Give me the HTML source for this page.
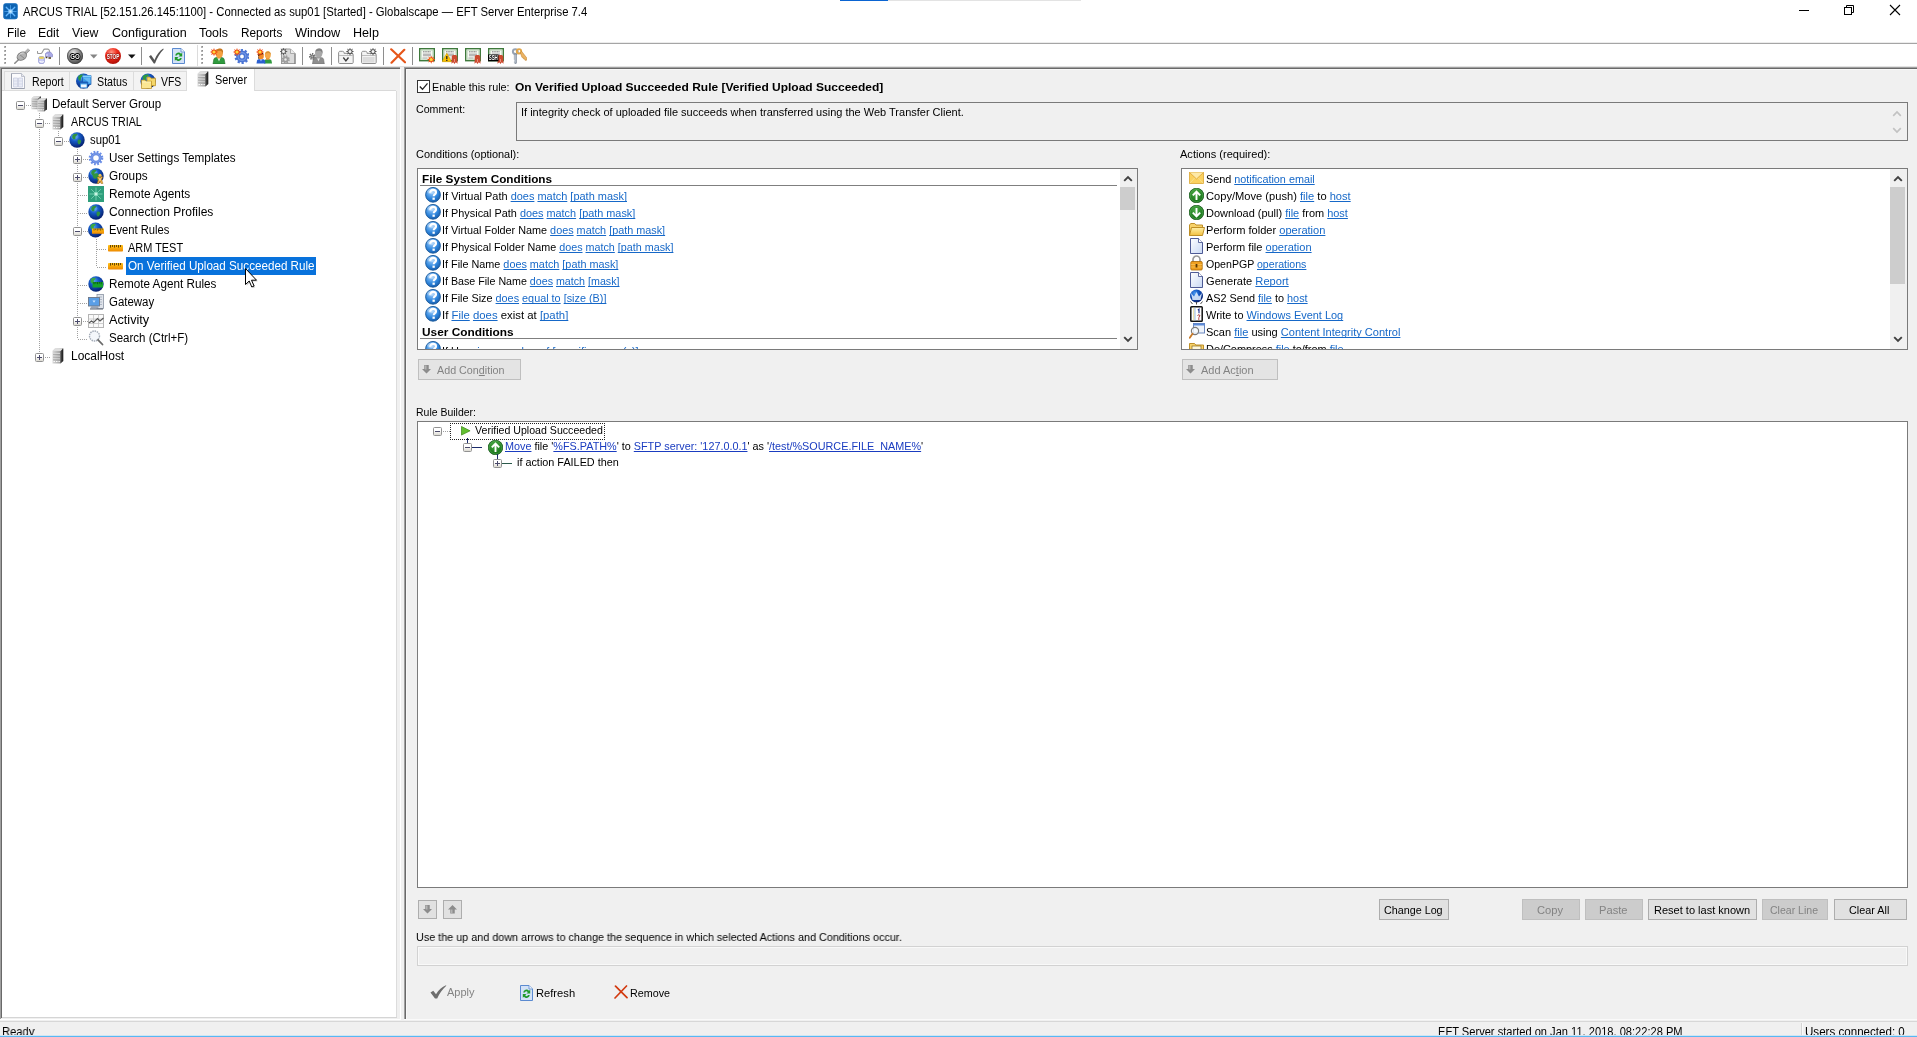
<!DOCTYPE html>
<html><head><meta charset="utf-8"><title>EFT Server</title>
<style>
html,body{margin:0;padding:0}
html{width:1917px;height:1037px;overflow:hidden}
body{width:1917px;height:1037px;overflow:hidden;background:#f0f0f0;position:relative;font-family:"Liberation Sans",sans-serif;}
.a{position:absolute;display:block}
.t{position:absolute;white-space:nowrap;line-height:16px;color:#000;transform-origin:0 50%}
.t u{color:#1668c8;text-decoration:underline;text-underline-offset:1px;text-decoration-thickness:1px;text-decoration-skip-ink:none}
.rb u{color:#1a3cc0}
.clip{position:absolute;overflow:hidden}
.root{position:absolute;left:0;top:0;width:1917px;height:1037px;overflow:hidden;will-change:transform}
</style></head>
<body>
<svg width="0" height="0" style="position:absolute"><defs>
<radialGradient id="gGlobe" cx="38%" cy="30%" r="75%"><stop offset="0" stop-color="#4f9ef2"/><stop offset=".4" stop-color="#1458c4"/><stop offset="1" stop-color="#041a66"/></radialGradient>
<radialGradient id="gGo" cx="40%" cy="30%" r="70%"><stop offset="0" stop-color="#e8e8e8"/><stop offset=".55" stop-color="#8a8a8a"/><stop offset="1" stop-color="#4a4a4a"/></radialGradient>
<radialGradient id="gStop" cx="40%" cy="28%" r="72%"><stop offset="0" stop-color="#ff9a8a"/><stop offset=".5" stop-color="#ee2a1a"/><stop offset="1" stop-color="#b01008"/></radialGradient>
<radialGradient id="gGreen" cx="45%" cy="35%" r="65%"><stop offset="0" stop-color="#4fb04a"/><stop offset="1" stop-color="#0f6a12"/></radialGradient>
<radialGradient id="gQ" cx="40%" cy="30%" r="75%"><stop offset="0" stop-color="#9fd0ff"/><stop offset=".6" stop-color="#2f86dc"/><stop offset="1" stop-color="#1458a8"/></radialGradient>
<linearGradient id="gSrv" x1="0" y1="0" x2="1" y2="0"><stop offset="0" stop-color="#d8d8d8"/><stop offset=".55" stop-color="#b0b0b0"/><stop offset="1" stop-color="#8a8a8a"/></linearGradient>
<linearGradient id="gRul" x1="0" y1="0" x2="0" y2="1"><stop offset="0" stop-color="#ffc21a"/><stop offset="1" stop-color="#ee8a00"/></linearGradient>
<linearGradient id="gFold" x1="0" y1="0" x2="0" y2="1"><stop offset="0" stop-color="#fff0a8"/><stop offset="1" stop-color="#f2c040"/></linearGradient>
<linearGradient id="gDoc" x1="0" y1="0" x2="1" y2="1"><stop offset="0" stop-color="#ffffff"/><stop offset="1" stop-color="#c8d8f4"/></linearGradient>
<radialGradient id="gAppGlow"><stop offset="0" stop-color="#d4efff"/><stop offset=".5" stop-color="#9ad4ff" stop-opacity=".9"/><stop offset="1" stop-color="#66b8ff" stop-opacity="0"/></radialGradient>
<radialGradient id="gAgGlow"><stop offset="0" stop-color="#f0fff8"/><stop offset=".5" stop-color="#c0f4de" stop-opacity=".8"/><stop offset="1" stop-color="#7fdcb8" stop-opacity="0"/></radialGradient>
<linearGradient id="gApp" x1="0" y1="0" x2="1" y2="1"><stop offset="0" stop-color="#2d9be6"/><stop offset="1" stop-color="#0a5fb4"/></linearGradient>
<symbol id="app" viewBox="0 0 15 17"><rect x=".3" y=".3" width="14.400" height="15.900" rx="2.600" fill="#0d62b0"/><rect x=".8" y=".8" width="13.400" height="14.900" rx="2.200" fill="none" stroke="#2a86d8" stroke-width=".6" opacity=".6"/><g stroke="#66b8ff" stroke-linecap="round"><path d="M3.200 4.200l8.600 8.600M11.800 4.200l-8.600 8.600" stroke-width="1.300"/><path d="M7.500 2.500v12M1.800 8.500h11.400" stroke-width=".8" opacity=".75"/></g><circle cx="7.500" cy="8.500" r="3.200" fill="url(#gAppGlow)"/></symbol><symbol id="plug" viewBox="0 0 16 16"><path d="M.3 15.700L5.500 10.800" stroke="#8a8a8a" stroke-width="1.500"/><path d="M10.500 5.800L15 1.300" stroke="#b4b4b4" stroke-width="3"/><path d="M11.300 6.600L15.800 2.100" stroke="#8e8e8e" stroke-width=".8"/><ellipse cx="7.800" cy="8.200" rx="5" ry="3.700" transform="rotate(-32 7.800 8.200)" fill="#b2b2b2" stroke="#7c7c7c" stroke-width="1"/><path d="M4.800 5.800l5.500 4.600" stroke="#858585" stroke-width="1"/><path d="M5 7.200c1-1.600 3-2.400 4.600-2" stroke="#dcdcdc" stroke-width=".9" fill="none"/></symbol><symbol id="net" viewBox="0 0 16 16"><path d="M.4 3v1.300c0 .8.500 1.200 1.200 1.200h2c.8 0 1.300-.4 1.700-1.200l1.200-2.400c.3-.6.700-.8 1.300-.8h3c.8 0 1.300.4 1.500 1.200l.3 1.500" fill="none" stroke="#9a9a9a" stroke-width="1.100"/><path d="M8.500 5.500l2-1.500h3l2 2.500v2.300h-7z" fill="#a9a9e6" stroke="#7a7ac0" stroke-width=".6"/><path d="M8.700 8.800h1.600v1.400H8.700zM11.500 9.200h2.500v1.500h-2.500z" fill="#4a3a1a"/><path d="M9.500 6h1v2h-1z" fill="#fff" opacity=".8"/><path d="M1.700 10c0-1 1.200-1.500 2.800-1.500s2.800.5 2.800 1.500v4c0 1-1.200 1.700-2.800 1.700S1.700 15 1.700 14z" fill="#c9ccf4" stroke="#7a80c8" stroke-width=".7"/><ellipse cx="4.500" cy="9.800" rx="2.700" ry="1.200" fill="#e6d060"/><path d="M2.500 13c.8 1.200 3 1.400 4.200.3" stroke="#fff" stroke-width="1.100" fill="none"/></symbol><symbol id="go" viewBox="0 0 16 16"><circle cx="8" cy="8" r="8" fill="url(#gGo)"/><circle cx="8" cy="8" r="7.600" fill="none" stroke="#3c3c3c" stroke-width=".6"/><text x="8" y="11" font-family="Liberation Sans" font-size="7.500" font-weight="bold" fill="#fff" stroke="#000" stroke-width="2.200" stroke-linejoin="round" paint-order="stroke" text-anchor="middle" textLength="9.500" lengthAdjust="spacingAndGlyphs">GO</text></symbol><symbol id="stop" viewBox="0 0 16 16"><circle cx="8" cy="8" r="8" fill="url(#gStop)"/><text x="8" y="10.900" font-family="Liberation Sans" font-size="7" font-weight="bold" fill="#fff" stroke="#8a0a04" stroke-width="1.200" stroke-linejoin="round" paint-order="stroke" text-anchor="middle" textLength="12.500" lengthAdjust="spacingAndGlyphs">STOP</text></symbol><symbol id="check" viewBox="0 0 16 16"><path d="M1 8.500l2-1.500 3.500 5C8.500 7 11.500 3 15.200.6l.5.600C12 5 9 10 7 15.500H5.800z" fill="#555"/></symbol><symbol id="checkg" viewBox="0 0 17 14"><path d="M.5 7.500l2.800-1.800 2.700 3.600C8.500 5 12 1.800 16 .2l.3.600C12.500 4 9.500 8.500 7.200 13.500H5z" fill="#6e6e6e"/></symbol><symbol id="refdoc" viewBox="0 0 13 16"><path d="M.5.500h8.500l3.500 3.500v11.500h-12z" fill="#d3e2f7" stroke="#5b8ad0" stroke-width="1"/><path d="M9 .5v3.500h3.500" fill="#eef4fc" stroke="#5b8ad0" stroke-width=".8"/><path d="M3.200 7.500a3.300 3.300 0 0 1 5.800-1.800l1.200-1v3.800H6.500l1.300-1.300A1.900 1.900 0 0 0 4.800 7.500z" fill="#1f9a2a"/><path d="M9.800 10a3.300 3.300 0 0 1-5.800 1.800l-1.200 1V9h3.700l-1.300 1.300A1.900 1.900 0 0 0 8.200 10z" fill="#1f9a2a"/></symbol><symbol id="usernew" viewBox="0 0 16 16"><path d="M3 16l.8-4.600c.3-1.200 1.400-1.900 3-1.900h4.400c1.600 0 2.700.7 3 1.900L15 16z" fill="#2f9a3e" stroke="#1a6a24" stroke-width=".6"/><path d="M7.300 9.600L9 13.500l1.700-3.900z" fill="#eef8ee"/><path d="M7.500 8h3v2.500h-3z" fill="#e89030"/><ellipse cx="9.200" cy="5.200" rx="3.700" ry="4.500" fill="#f5a040"/><path d="M5.800 3.600C6.500 1.200 8.500.3 10.500.6c2.300.4 3 2.400 2.400 5.400-.3-2-1.200-3.300-3-3.300-1.500 0-2.700.3-4.100.9z" fill="#c87820"/><path d="M4 0l.9 2.200L7 1l-1 2.100L8.200 4 6 4.900 7 7 4.900 6 4 8.200 3.100 6 1 7l1-2.100L-.2 4 2 3.100 1 1l2.100 1.200z" fill="#f04a10"/><circle cx="4" cy="4" r="1.600" fill="#ffd83a"/></symbol><symbol id="gearnew" viewBox="0 0 16 16"><g transform="translate(9 8.500)"><circle r="6.400" fill="none" stroke="#4a74d4" stroke-width="2.200" stroke-dasharray="2.200 1.820"/><circle r="3.900" fill="none" stroke="#4a74d4" stroke-width="4"/><circle r="3.900" fill="none" stroke="#86a6ea" stroke-width="1.200" opacity=".7"/></g><path d="M4 0l.9 2.200L7 1l-1 2.100L8.200 4 6 4.900 7 7 4.900 6 4 8.200 3.100 6 1 7l1-2.100L-.2 4 2 3.100 1 1l2.100 1.200z" fill="#f04a10"/><circle cx="4" cy="4" r="1.600" fill="#ffd83a"/></symbol><symbol id="usersnew" viewBox="0 0 16 16"><path d="M8 15.500l.5-2.800c.2-1 1-1.500 2.200-1.500h2.600c1.200 0 2 .5 2.200 1.500l.5 2.800z" fill="#2f9a3e"/><path d="M10 9.500h3.500v2.200H10z" fill="#e89030"/><ellipse cx="11.800" cy="7" rx="3" ry="3.600" fill="#f5a848"/><path d="M9 5.800c.5-2 2-2.700 3.500-2.500 1.600.3 2.500 1.700 2.200 3.700-.6-1.500-1.500-2-2.700-2-1.200 0-2 .3-3 .8z" fill="#d89030"/><path d="M.5 15.500l.5-2.800c.2-1 1-1.500 2.200-1.500h3.600c1.200 0 2 .5 2.200 1.500l.5 2.800z" fill="#2a5fd0"/><path d="M4.200 11.200L5 13.500l.8-2.300z" fill="#e8f0ff"/><ellipse cx="5" cy="8" rx="2.800" ry="3.300" fill="#f08a28"/><path d="M2.200 8.500c-.4-2.500 1-4 2.800-4 1.500 0 2.500.8 2.800 2-1.800-.6-3.500 0-5.600 2z" fill="#3a1a08"/><path d="M2.300 8.300c.2 1.500.8 2.500 1.500 3-1.400 0-2.200-1.200-1.500-3z" fill="#3a1a08"/><path d="M4 0l.9 2.200L7 1l-1 2.100L8.200 4 6 4.900 7 7 4.900 6 4 8.200 3.100 6 1 7l1-2.100L-.2 4 2 3.100 1 1l2.100 1.200z" fill="#f04a10"/><circle cx="4" cy="4" r="1.600" fill="#ffd83a"/></symbol><symbol id="docgray" viewBox="0 0 16 16"><path d="M1.500 1h9l4.500 4.500V16H1.500z" fill="#dadada" stroke="#9a9a9a" stroke-width="1"/><path d="M15 16V5.500M1.500 16H15" stroke="#7c7c7c" stroke-width="1"/><path d="M10.500 1v4.500H15" fill="#ececec" stroke="#9a9a9a" stroke-width=".8"/><g transform="translate(5.500 11.500)"><circle r="3.400" fill="none" stroke="#9c9c9c" stroke-width="1.700" stroke-dasharray="1.500 1.170"/><circle r="2.200" fill="#c4c4c4" stroke="#9c9c9c" stroke-width="1.500"/><circle r="1" fill="#ececec"/></g><g transform="translate(-.5 -.5)"><path d="M4 0l.9 2.200L7 1l-1 2.100L8.200 4 6 4.900 7 7 4.900 6 4 8.200 3.100 6 1 7l1-2.100L-.2 4 2 3.100 1 1l2.100 1.200z" fill="#5e5e5e"/><circle cx="4" cy="4" r="1.500" fill="#f2f2f2"/></g></symbol><symbol id="usergray" viewBox="0 0 16 16"><path d="M3.500 16l.7-4.600c.3-1.200 1.400-1.900 3-1.900h4.400c1.600 0 2.700.7 3 1.900l.7 4.600z" fill="#8e8e8e" stroke="#6e6e6e" stroke-width=".6"/><path d="M7.800 9.600l1.700 4 1.700-4z" fill="#ececec"/><path d="M8 8h3v2.500H8z" fill="#9a9a9a"/><ellipse cx="9.700" cy="5" rx="3.700" ry="4.500" fill="#a8a8a8"/><path d="M6.300 3.600C7 1.200 9 .3 11 .6c2.300.4 3 2.400 2.400 5.400-.3-2-1.200-3.300-3-3.300-1.500 0-2.700.3-4.100.9z" fill="#808080"/><g transform="translate(3.300 8.500)"><circle r="2.600" fill="none" stroke="#6c6c6c" stroke-width="1.600" stroke-dasharray="1.300 1.030"/><circle r="1.500" fill="#b0b0b0" stroke="#6c6c6c" stroke-width="1.200"/></g></symbol><symbol id="folder1" viewBox="0 0 16 16"><path d="M.6 14.500V4.800c0-.9.600-1.500 1.500-1.500h2.400c.9 0 1.500.5 1.500 1.400v.6h8c.8 0 1.200.4 1.200 1.200v8c0 .6-.4 1-1 1H1.600c-.6 0-1-.4-1-1z" fill="#f4f4f4" stroke="#8e8e8e" stroke-width="1"/><path d="M1 7.500h13.800" stroke="#b0b0b0" stroke-width=".8"/><path d="M5.300 9.500l2.600 3.500 2.600-3.500" fill="none" stroke="#3c3c3c" stroke-width="1.300"/><g transform="translate(8 -.5)"><path d="M4 0l.9 2.200L7 1l-1 2.100L8.200 4 6 4.900 7 7 4.900 6 4 8.200 3.100 6 1 7l1-2.100L-.2 4 2 3.100 1 1l2.100 1.200z" fill="#555"/><circle cx="4" cy="4" r="1.500" fill="#f6f6f6"/></g></symbol><symbol id="folder2" viewBox="0 0 16 16"><path d="M.6 14.500V4.800c0-.9.600-1.500 1.500-1.500h2.400c.9 0 1.500.5 1.500 1.400v.6h8c.8 0 1.200.4 1.200 1.200v8c0 .6-.4 1-1 1H1.600c-.6 0-1-.4-1-1z" fill="#f4f4f4" stroke="#8e8e8e" stroke-width="1"/><path d="M1 7.500h13.800" stroke="#b0b0b0" stroke-width=".8"/><path d="M2 9h11.500v5.500H2z" fill="#d6d6d6" opacity=".8"/><g transform="translate(8 -.5)"><path d="M4 0l.9 2.200L7 1l-1 2.100L8.200 4 6 4.900 7 7 4.900 6 4 8.200 3.100 6 1 7l1-2.100L-.2 4 2 3.100 1 1l2.100 1.200z" fill="#555"/><circle cx="4" cy="4" r="1.500" fill="#f6f6f6"/></g></symbol><symbol id="redx" viewBox="0 0 16 16"><path d="M1.200 1.300l13.800 13M14.300 1.800L1.500 14.700" stroke="#e6561a" stroke-width="2.200" stroke-linecap="round" fill="none"/></symbol><symbol id="cert1" viewBox="0 0 16 16"><rect x=".7" y=".7" width="14.600" height="12" fill="#f6f8f4" stroke="#3f7a3c" stroke-width="1.400"/><rect x="2.200" y="2.200" width="11.600" height="9" fill="none" stroke="#bcd8b8" stroke-width=".8"/><path d="M4 3.800h8" stroke="#6a6a6a" stroke-width=".9" stroke-dasharray="1.200 .4"/><rect x="4" y="5.500" width="8" height="2.800" fill="#b8b8b8"/><path d="M3.500 10h5" stroke="#9a9a9a" stroke-width=".8"/><g transform="translate(8.200 7.500) scale(1)"><path d="M4 0l.9 2.200L7 1l-1 2.100L8.200 4 6 4.900 7 7 4.900 6 4 8.200 3.100 6 1 7l1-2.100L-.2 4 2 3.100 1 1l2.100 1.200z" fill="#f04a10"/><circle cx="4" cy="4" r="1.600" fill="#ffd83a"/></g></symbol><symbol id="cert2" viewBox="0 0 16 16"><rect x=".7" y=".7" width="14.600" height="12" fill="#f6f8f4" stroke="#3f7a3c" stroke-width="1.400"/><rect x="2.200" y="2.200" width="11.600" height="9" fill="none" stroke="#bcd8b8" stroke-width=".8"/><path d="M4 3.800h8" stroke="#6a6a6a" stroke-width=".9" stroke-dasharray="1.200 .4"/><rect x="4" y="5.500" width="8" height="2.800" fill="#b8b8b8"/><path d="M3.500 10h5" stroke="#9a9a9a" stroke-width=".8"/><path d="M4.800 5.200l4.800 8.500H0z" fill="#ffc400" stroke="#c99400" stroke-width=".5"/><path d="M4.800 8v3.200M4.800 12v1" stroke="#222" stroke-width="1.300"/><path d="M9.800 8.500c0-1 .8-1.500 2.700-1.500s2.700.5 2.700 1.500l.3 7.300-1.700-1.500-1.300 1.700-1.300-1.700-1.700 1.500z" fill="#cc4a30"/><path d="M12.500 11v3" stroke="#f0a090" stroke-width=".8"/></symbol><symbol id="cert3" viewBox="0 0 16 16"><rect x=".7" y=".7" width="14.600" height="12" fill="#f6f8f4" stroke="#3f7a3c" stroke-width="1.400"/><rect x="2.200" y="2.200" width="11.600" height="9" fill="none" stroke="#bcd8b8" stroke-width=".8"/><path d="M4 3.800h8" stroke="#6a6a6a" stroke-width=".9" stroke-dasharray="1.200 .4"/><rect x="4" y="5.500" width="8" height="2.800" fill="#b8b8b8"/><path d="M3.500 10h5" stroke="#9a9a9a" stroke-width=".8"/><path d="M9.800 8.500c0-1 .8-1.500 2.700-1.500s2.700.5 2.700 1.500l.3 7.300-1.700-1.500-1.300 1.700-1.300-1.700-1.700 1.500z" fill="#cc4a30"/><path d="M12.500 11v3" stroke="#f0a090" stroke-width=".8"/></symbol><symbol id="cert4" viewBox="0 0 16 16"><rect x=".7" y=".7" width="14.600" height="12" fill="#f6f8f4" stroke="#3f7a3c" stroke-width="1.400"/><rect x="2.200" y="2.200" width="11.600" height="9" fill="none" stroke="#bcd8b8" stroke-width=".8"/><path d="M4 3.800h8" stroke="#6a6a6a" stroke-width=".9" stroke-dasharray="1.200 .4"/><rect x="4" y="5.500" width="8" height="2.800" fill="#b8b8b8"/><path d="M3.500 10h5" stroke="#9a9a9a" stroke-width=".8"/><path d="M9.800 8.500c0-1 .8-1.500 2.700-1.500s2.700.5 2.700 1.500l.3 7.300-1.700-1.500-1.300 1.700-1.300-1.700-1.700 1.500z" fill="#cc4a30"/><path d="M12.500 11v3" stroke="#f0a090" stroke-width=".8"/><rect x="0" y="6.500" width="10.500" height="6.800" fill="#000"/><text x="5.250" y="12.200" font-family="Liberation Sans" font-size="6.500" font-weight="bold" fill="#fff" text-anchor="middle" textLength="9.200" lengthAdjust="spacingAndGlyphs">SSH</text></symbol><symbol id="keys" viewBox="0 0 16 16"><circle cx="4.300" cy="3.600" r="2.400" fill="none" stroke="#98a4b4" stroke-width="2"/><path d="M3.300 6h2.200v9l-1 1-1.200-1.200.7-.8-.7-.9.700-.8-.7-.9z" fill="#98a4b4" stroke="#6e7a8a" stroke-width=".5"/><path d="M4 6.500v8" stroke="#dfe5ee" stroke-width=".7"/><circle cx="8" cy="3.300" r="2.200" fill="none" stroke="#e2a648" stroke-width="1.900"/><path d="M9.300 4.500l1.500-1 5 6.500-.2 2.200-1.600.1-.4-1.400-1.300-.1-.2-1.300-1.200-.2z" fill="#ecb464" stroke="#b87820" stroke-width=".5"/></symbol><symbol id="report" viewBox="0 0 14 16"><path d="M.5.500h10l3 3v12h-13z" fill="#fbfbfd" stroke="#b4b8c4" stroke-width="1"/><path d="M.5 15.500h13M.5.500v15" stroke="#9aa0ae" stroke-width="1"/><path d="M10.500.5v3h3" fill="#e6e8ee" stroke="#b4b8c4" stroke-width=".8"/><path d="M2.500 5h4v9h-4zM7.500 5h4v9h-4z" fill="#e9ecf6" stroke="#c4c9dc" stroke-width=".7"/><path d="M2.500 8h9M2.500 11h9" stroke="#cdd2e2" stroke-width=".6"/></symbol><symbol id="status" viewBox="0 0 16 16"><circle cx="7.500" cy="8" r="7.500" fill="url(#gGlobe)"/><path d="M2.500 3c2-1.500 4-1.800 5.500-1-1 1.500-2.500 1.500-3 3-.5 1.500.5 2-1 3C2.500 7 1.500 4.500 2.500 3z" fill="#2f9a3e"/><path d="M6.500 2.500h8.500v9h-8.500z" fill="#3a9ae8" stroke="#1450a8" stroke-width=".7"/><path d="M6.500 2.500h8.500v1.800h-8.500z" fill="#7fd0ff"/><path d="M7 5l7.500 5.500V5z" fill="#8ad4ff" opacity=".55"/><path d="M4 9h7.500v6H4z" fill="#5ab4f4" stroke="#1450a8" stroke-width=".7"/><path d="M4 9h7.500v1.500H4z" fill="#1a5cb8"/><path d="M5 11.500h5.500v2.800H5z" fill="#eef6ff"/></symbol><symbol id="vfs" viewBox="0 0 16 16"><circle cx="8" cy="8" r="7.600" fill="url(#gGlobe)"/><path d="M3 3c2-1.500 4.500-1.800 6-1-1 1.500-2.500 1.500-3 3-.5 1.500.5 2-1 3C3 7 2 4.500 3 3z" fill="#2f9a3e"/><path d="M7 4h3l1 1.200h4.500v7.500H7z" fill="#f5d768" stroke="#b88a1a" stroke-width=".7"/><path d="M1.500 7h3.500l1 1.200h5.500V15.500H1.500z" fill="#fbe692" stroke="#b88a1a" stroke-width=".7"/><path d="M2 9h9" stroke="#fff6c8" stroke-width=".8"/></symbol><symbol id="server" viewBox="0 0 12 16"><path d="M.5 3l2.500-2.500h8V13L8.500 15.500h-8z" fill="url(#gSrv)"/><path d="M8.500 3v12.500L11 13V.5z" fill="#3c3c3c"/><path d="M10.500.5h.8V13l-.8.800z" fill="#111"/><path d="M.5 3h8L11 .5H3z" fill="#dedede"/><path d="M1 5.500h7M1 8.300h7M1 11h7" stroke="#e2e2e2" stroke-width=".9"/><path d="M1 6.300h7M1 9.100h7M1 11.800h7" stroke="#8e8e8e" stroke-width=".6"/><path d="M1.500 13.500h1.500M4 13.500h1.500M6.500 13.500h1.300" stroke="#fafafa" stroke-width="1.100"/></symbol><symbol id="servers" viewBox="0 0 16 16"><g transform="translate(0 0) scale(.85)"><path d="M.5 3l2.500-2.500h8V13L8.500 15.500h-8z" fill="url(#gSrv)"/><path d="M8.500 3v12.500L11 13V.5z" fill="#3c3c3c"/><path d="M10.500.5h.8V13l-.8.800z" fill="#111"/><path d="M.5 3h8L11 .5H3z" fill="#dedede"/><path d="M1 5.500h7M1 8.300h7M1 11h7" stroke="#e2e2e2" stroke-width=".9"/><path d="M1 6.300h7M1 9.100h7M1 11.800h7" stroke="#8e8e8e" stroke-width=".6"/><path d="M1.500 13.500h1.500M4 13.500h1.500M6.500 13.500h1.300" stroke="#fafafa" stroke-width="1.100"/></g><g transform="translate(6 2) scale(.87)"><path d="M.5 3l2.500-2.500h8V13L8.500 15.500h-8z" fill="url(#gSrv)"/><path d="M8.500 3v12.500L11 13V.5z" fill="#3c3c3c"/><path d="M10.500.5h.8V13l-.8.800z" fill="#111"/><path d="M.5 3h8L11 .5H3z" fill="#dedede"/><path d="M1 5.500h7M1 8.300h7M1 11h7" stroke="#e2e2e2" stroke-width=".9"/><path d="M1 6.300h7M1 9.100h7M1 11.800h7" stroke="#8e8e8e" stroke-width=".6"/><path d="M1.500 13.500h1.500M4 13.500h1.500M6.500 13.500h1.300" stroke="#fafafa" stroke-width="1.100"/></g></symbol><symbol id="globe" viewBox="0 0 16 16"><circle cx="8" cy="8" r="7.700" fill="url(#gGlobe)"/><ellipse cx="5.500" cy="4.500" rx="3.800" ry="2.600" fill="#7fc0ff" opacity=".35"/><path d="M4.2 2.6c1.4-.9 3.2-1 4.2-.4-.2 1-1.200 1.400-1.800 2.300-.5.900.3 1.700-.4 2.500-.7.700-1.900.2-2.500-.6C3 5.400 3.200 3.500 4.200 2.600zM9.300 7.800c1-.5 2.300-.1 2.800.8.400.9-.2 2.200-.9 3.100-.6.800-1.500 1.200-1.900.4-.4-.9-.9-1.500-.8-2.500 0-.8.300-1.500.8-1.800z" fill="#2f9440"/></symbol><symbol id="gear" viewBox="0 0 16 16"><g transform="translate(8 8)"><circle r="6" fill="none" stroke="#6a8ee6" stroke-width="2.600" stroke-dasharray="1.700 1.442"/><circle r="4.200" fill="none" stroke="#5e84e0" stroke-width="2.800"/><circle r="4.200" fill="none" stroke="#9cb6f2" stroke-width="1" opacity=".6"/></g></symbol><symbol id="groups" viewBox="0 0 16 16"><circle cx="8" cy="8" r="7.700" fill="url(#gGlobe)"/><ellipse cx="5.500" cy="4.500" rx="3.800" ry="2.600" fill="#7fc0ff" opacity=".35"/><path d="M4.2 2.6c1.4-.9 3.2-1 4.2-.4-.2 1-1.200 1.400-1.800 2.300-.5.900.3 1.700-.4 2.500-.7.700-1.900.2-2.500-.6C3 5.400 3.200 3.500 4.200 2.600zM9.300 7.800c1-.5 2.300-.1 2.800.8.400.9-.2 2.200-.9 3.100-.6.800-1.500 1.200-1.900.4-.4-.9-.9-1.500-.8-2.500 0-.8.300-1.500.8-1.800z" fill="#2f9440"/><path d="M5 6.500c1.500-1 3.500-1.500 5-.8 1 .6.500 2-.5 3-1 .9-2 2.500-3 2-1.200-.6-2.300-2.800-1.500-4.200z" fill="#2f9440"/><circle cx="12" cy="7.300" r="1.500" fill="#f4c050"/><path d="M9 9.500l2-1 1 1.300 1.500-1.500 1.300.700-1.300 2.500 1.500 4h-2l-1-2.300-1 2.300H9l1.500-4z" fill="#eeb040" stroke="#8a5a10" stroke-width=".4"/><path d="M11.500 10.500l.5 3 .5-3z" fill="#fff"/></symbol><symbol id="agents" viewBox="0 0 16 16"><rect width="16" height="16" fill="#2e9f7c"/><g stroke="#a8f0d4" stroke-width=".9" opacity=".6"><path d="M8 1.500v13M1.500 8h13M3.200 3.200l9.600 9.600M12.800 3.200l-9.600 9.600"/></g><circle cx="8" cy="8" r="2.600" fill="url(#gAgGlow)"/></symbol><symbol id="ruler" viewBox="0 0 15 7"><rect x="0" y="0" width="15" height="6.500" rx=".8" fill="url(#gRul)"/><path d="M2.500 0v2.600M4.500 0v2M6.500 0v2.600M8.500 0v2M10.500 0v2.600M12.500 0v2" stroke="#5a3a00" stroke-width=".9"/></symbol><symbol id="evrules" viewBox="0 0 16 16"><circle cx="7.500" cy="8" r="7.500" fill="url(#gGlobe)"/><path d="M3.500 2.600c1.400-.9 3.200-1 4.200-.4-.2 1-1.200 1.400-1.800 2.300-.5.900.3 1.700-.4 2.500-.7.700-1.900.2-2.500-.6-.7-1-.5-2.900.5-3.800z" fill="#3aa845"/><g transform="translate(4 6.500) scale(.82)"><rect x="0" y="0" width="15" height="6.500" rx=".8" fill="url(#gRul)"/><path d="M2.500 0v2.600M4.500 0v2M6.500 0v2.600M8.500 0v2M10.500 0v2.600M12.500 0v2" stroke="#5a3a00" stroke-width=".9"/></g></symbol><symbol id="agrules" viewBox="0 0 16 16"><circle cx="8" cy="8" r="7.700" fill="url(#gGlobe)"/><path d="M3.500 2.600c1.400-.9 3.200-1 4.200-.4-.2 1-1.200 1.400-1.800 2.300-.5.900.3 1.700-.4 2.500-.7.700-1.900.2-2.500-.6-.7-1-.5-2.900.5-3.800z" fill="#3aa845"/><rect x="4.500" y="6" width="10.500" height="5.500" fill="#16a32a"/><path d="M6 6v2.200M7.800 6v1.600M9.600 6v2.200M11.400 6v1.600M13.200 6v2.200" stroke="#064a10" stroke-width=".8"/></symbol><symbol id="gateway" viewBox="0 0 16 16"><rect x="9" y=".5" width="6.500" height="14" fill="#dfe3ea" stroke="#8a94a4" stroke-width=".8"/><path d="M10.500 3h3.500M10.500 5.500h3.500M10.500 8h3.500M10.500 10.500h3.500" stroke="#9aa4b4" stroke-width=".7"/><rect x=".5" y="3.500" width="11" height="8.500" fill="#5a9ee6" stroke="#6a7688" stroke-width=".9"/><path d="M4.500 6.500h3l-1.500 2.200z" fill="#cfe6ff"/><path d="M2 14.500h9l-1.500-2.500h-6z" fill="#9aa4b4"/><path d="M2 15h13" stroke="#5a6270" stroke-width="1"/></symbol><symbol id="activity" viewBox="0 0 16 14"><rect x=".5" y=".5" width="15" height="13" fill="#fafafa" stroke="#b4b4b4" stroke-width="1"/><path d="M5.500 .5v13M10.500 .5v13M.5 5h15M.5 9.500h15" stroke="#c4c4c4" stroke-width=".8"/><path d="M1 9l2.500-2 2 1.500 4-4 2.500 2.500 3.500-3" fill="none" stroke="#555" stroke-width="1.100"/></symbol><symbol id="search" viewBox="0 0 16 16"><circle cx="6.500" cy="6" r="5" fill="#f4f7fb" stroke="#a4acb8" stroke-width="1.400" stroke-dasharray="1.500 .8"/><path d="M10 9.800l4.500 4.700" stroke="#6a6a6a" stroke-width="1.800" stroke-linecap="round"/></symbol><symbol id="qmark" viewBox="0 0 16 16"><circle cx="8" cy="7.800" r="7.400" fill="url(#gQ)" stroke="#1c5a9a" stroke-width=".9"/><ellipse cx="7.200" cy="4.500" rx="4.800" ry="2.800" fill="#fff" opacity=".3"/><path d="M5.200 5.800c0-1.900 1.200-2.900 2.900-2.900s2.900 1 2.900 2.500c0 1.900-2.300 2-2.300 3.800" fill="none" stroke="#fff" stroke-width="2.100"/><rect x="7.500" y="10.600" width="2.300" height="2.200" fill="#fff"/></symbol><symbol id="mail" viewBox="0 0 15 12"><rect x=".4" y=".4" width="14.200" height="11.200" fill="#fbd15e" stroke="#dba83a" stroke-width=".8"/><path d="M.5.500L7.500 7l7-6.500" fill="#fde9a8" stroke="#e2a93a" stroke-width=".9"/><path d="M.5 11.500L5.800 5.800M14.500 11.500L9.200 5.800" stroke="#f5e2a0" stroke-width=".8"/></symbol><symbol id="upg" viewBox="0 0 15 15"><circle cx="7.500" cy="7.500" r="7.300" fill="url(#gGreen)" stroke="#0c4c10" stroke-width=".7"/><circle cx="7.500" cy="7.500" r="6.300" fill="none" stroke="#6cc068" stroke-width=".6" opacity=".7"/><path d="M7.500 12V3.800M3.800 7.300L7.500 3.500l3.700 3.800" fill="none" stroke="#fff" stroke-width="1.900"/></symbol><symbol id="downg" viewBox="0 0 15 15"><circle cx="7.500" cy="7.500" r="7.300" fill="url(#gGreen)" stroke="#0c4c10" stroke-width=".7"/><circle cx="7.500" cy="7.500" r="6.300" fill="none" stroke="#6cc068" stroke-width=".6" opacity=".7"/><path d="M7.500 3v8.200M3.800 7.700L7.500 11.500l3.700-3.800" fill="none" stroke="#fff" stroke-width="1.900"/></symbol><symbol id="folder" viewBox="0 0 16 13"><path d="M.5 12.500V2l1.200-1.500h4l1.300 1.500h6.500v2" fill="#f7d26a" stroke="#b8861a" stroke-width=".9"/><path d="M.5 12.500L2.500 4.500h13l-2 8z" fill="url(#gFold)" stroke="#b8861a" stroke-width=".9"/></symbol><symbol id="file" viewBox="0 0 13 16"><path d="M.5.500h8l4 4v11h-12z" fill="url(#gDoc)" stroke="#3c4a8a" stroke-width=".9"/><path d="M8.500.5v4h4" fill="#fff" stroke="#3c4a8a" stroke-width=".8"/></symbol><symbol id="lock" viewBox="0 0 13 16"><path d="M3 7V4.500a3.500 3.500 0 0 1 7 0V7" fill="none" stroke="#9a9a9a" stroke-width="1.700"/><rect x=".8" y="6.500" width="11.400" height="8.500" rx="1" fill="#f0a020" stroke="#a86808" stroke-width=".8"/><path d="M.8 9.500h11.400M.8 12h11.400" stroke="#f8c860" stroke-width=".7"/><rect x="5.600" y="9" width="1.800" height="3.500" fill="#5a3600"/></symbol><symbol id="as2" viewBox="0 0 15 16"><circle cx="7.500" cy="7" r="6.500" fill="url(#gGlobe)"/><path d="M2 4l3 3.500L7.500 3l2.500 4.500L13 4l-1.500 7h-8z" fill="#e8f2ff" opacity=".85"/><path d="M1.500 12.500l2 2.500M13.500 12.500l-2 2.500M7.500 13v2.500" stroke="#4a4a4a" stroke-width="1"/></symbol><symbol id="evlog" viewBox="0 0 13 16"><rect x=".8" y=".8" width="11.400" height="14.400" rx=".8" fill="#fff" stroke="#111" stroke-width="1.500"/><path d="M3.800 1.500v13" stroke="#e8d88a" stroke-width="1"/><path d="M5 1.500v13" stroke="#8ab4e8" stroke-width=".9"/><path d="M7.800 4.200l1.200-1v4" fill="none" stroke="#1a2a8a" stroke-width="1.100"/><path d="M7.600 9.600c.2-1 2.400-1 2.200.3-.1.800-1 .8-1 1.800" fill="none" stroke="#a01818" stroke-width="1"/><circle cx="8.800" cy="13" r=".7" fill="#a01818"/></symbol><symbol id="scan" viewBox="0 0 16 16"><rect x="4.500" y=".5" width="11" height="9.500" fill="#eef3fa" stroke="#5a7ab8" stroke-width=".9"/><rect x="4.500" y=".5" width="11" height="2" fill="#5a8ad8"/><circle cx="6" cy="8" r="3.600" fill="#f8fbff" fill-opacity=".8" stroke="#7a7a7a" stroke-width="1.200"/><path d="M3.500 10.800L.8 14.800" stroke="#c87a28" stroke-width="1.800" stroke-linecap="round"/></symbol><symbol id="zipf" viewBox="0 0 16 13"><path d="M.5 12.500V1.500h5l1.300 1.500h7.700v9.500z" fill="#f7d26a" stroke="#b8861a" stroke-width=".9"/><rect x="3" y="4" width="9" height="8" fill="#fff8dc" stroke="#8a6a1a" stroke-width=".7"/></symbol><symbol id="play" viewBox="0 0 11 11"><path d="M.5.500L10 5.300.5 10z" fill="#62c030" stroke="#3c8a18" stroke-width=".8"/></symbol><symbol id="arrdn" viewBox="0 0 10 10"><path d="M2.500 0h5v4.500h2.500L5 9.500 0 4.500h2.500z" fill="#8c8c8c"/><path d="M3.200 .5h1.800v4.500H3.200z" fill="#b4b4b4"/></symbol><symbol id="arrup" viewBox="0 0 10 10"><path d="M2.500 9.500h5V5h2.500L5 0 0 5h2.500z" fill="#8c8c8c"/><path d="M3.200 5h1.800v4H3.200z" fill="#b4b4b4"/></symbol></defs></svg>
<div class="root">
<div class="a" style="left:0px;top:0px;width:1917px;height:43px;background:#fff;"></div>
<div class="a" style="left:840px;top:0px;width:48px;height:1px;background:#0a64d2;"></div>
<div class="a" style="left:888px;top:0px;width:193px;height:1px;background:#e3e3e3;"></div>
<svg class="a" style="left:3px;top:3px" width="15" height="17"><use href="#app"/></svg>
<span class="t " style="left:22.90px;top:4.03px;font-size:12px;color:#000;transform:scaleX(0.9417);">ARCUS TRIAL [52.151.26.145:1100] - Connected as sup01 [Started] - Globalscape — EFT Server Enterprise 7.4</span>
<div class="a" style="left:1799px;top:10px;width:10px;height:1px;background:#000;"></div>
<svg class="a" style="left:1843px;top:4px;" width="12" height="12" viewBox="0 0 12 12"><path d="M3.500 3.500V1.500h7v7h-2" fill="none" stroke="#000" stroke-width="1"/><rect x="1.500" y="3.500" width="7" height="7" fill="none" stroke="#000" stroke-width="1"/></svg>
<svg class="a" style="left:1889px;top:4px;" width="12" height="12" viewBox="0 0 12 12"><path d="M1 1l10 10M11 1L1 11" stroke="#000" stroke-width="1.100" fill="none"/></svg>
<span class="t " style="left:6.60px;top:24.53px;font-size:12px;color:#000;transform:scaleX(0.9822);">File</span>
<span class="t " style="left:38.30px;top:24.53px;font-size:12px;color:#000;transform:scaleX(1.0296);">Edit</span>
<span class="t " style="left:72.30px;top:24.53px;font-size:12px;color:#000;transform:scaleX(1.0195);">View</span>
<span class="t " style="left:111.60px;top:24.53px;font-size:12px;color:#000;transform:scaleX(1.0464);">Configuration</span>
<span class="t " style="left:199.30px;top:24.53px;font-size:12px;color:#000;transform:scaleX(1.0351);">Tools</span>
<span class="t " style="left:241.00px;top:24.53px;font-size:12px;color:#000;transform:scaleX(0.9826);">Reports</span>
<span class="t " style="left:295.00px;top:24.53px;font-size:12px;color:#000;transform:scaleX(1.0612);">Window</span>
<span class="t " style="left:353.00px;top:24.53px;font-size:12px;color:#000;transform:scaleX(1.0491);">Help</span>
<div class="a" style="left:0px;top:43px;width:1917px;height:1px;background:#a5a5a5;"></div>
<div class="a" style="left:0px;top:44px;width:1917px;height:22px;background:#fff;"></div>
<div class="a" style="left:0px;top:42px;width:1917px;height:1px;background:#ececec;"></div>
<div class="a" style="left:4px;top:46px;width:2px;height:2px;background:#b2b2b2;"></div>
<div class="a" style="left:5px;top:46px;width:1px;height:1px;background:#8e8e8e;"></div>
<div class="a" style="left:4px;top:50px;width:2px;height:2px;background:#b2b2b2;"></div>
<div class="a" style="left:5px;top:50px;width:1px;height:1px;background:#8e8e8e;"></div>
<div class="a" style="left:4px;top:54px;width:2px;height:2px;background:#b2b2b2;"></div>
<div class="a" style="left:5px;top:54px;width:1px;height:1px;background:#8e8e8e;"></div>
<div class="a" style="left:4px;top:58px;width:2px;height:2px;background:#b2b2b2;"></div>
<div class="a" style="left:5px;top:58px;width:1px;height:1px;background:#8e8e8e;"></div>
<div class="a" style="left:4px;top:62px;width:2px;height:2px;background:#b2b2b2;"></div>
<div class="a" style="left:5px;top:62px;width:1px;height:1px;background:#8e8e8e;"></div>
<div class="a" style="left:201px;top:46px;width:2px;height:2px;background:#b2b2b2;"></div>
<div class="a" style="left:202px;top:46px;width:1px;height:1px;background:#8e8e8e;"></div>
<div class="a" style="left:201px;top:50px;width:2px;height:2px;background:#b2b2b2;"></div>
<div class="a" style="left:202px;top:50px;width:1px;height:1px;background:#8e8e8e;"></div>
<div class="a" style="left:201px;top:54px;width:2px;height:2px;background:#b2b2b2;"></div>
<div class="a" style="left:202px;top:54px;width:1px;height:1px;background:#8e8e8e;"></div>
<div class="a" style="left:201px;top:58px;width:2px;height:2px;background:#b2b2b2;"></div>
<div class="a" style="left:202px;top:58px;width:1px;height:1px;background:#8e8e8e;"></div>
<div class="a" style="left:201px;top:62px;width:2px;height:2px;background:#b2b2b2;"></div>
<div class="a" style="left:202px;top:62px;width:1px;height:1px;background:#8e8e8e;"></div>
<div class="a" style="left:59px;top:47px;width:1px;height:18px;background:#8e8e8e;"></div>
<div class="a" style="left:141px;top:47px;width:1px;height:18px;background:#8e8e8e;"></div>
<div class="a" style="left:302px;top:47px;width:1px;height:18px;background:#8e8e8e;"></div>
<div class="a" style="left:331px;top:47px;width:1px;height:18px;background:#8e8e8e;"></div>
<div class="a" style="left:383px;top:47px;width:1px;height:18px;background:#8e8e8e;"></div>
<div class="a" style="left:412px;top:47px;width:1px;height:18px;background:#8e8e8e;"></div>
<div class="a" style="left:197px;top:45px;width:1px;height:21px;background:#dcdcdc;"></div>
<svg class="a" style="left:14px;top:48px" width="16" height="16"><use href="#plug"/></svg>
<svg class="a" style="left:37px;top:48px" width="16" height="16"><use href="#net"/></svg>
<svg class="a" style="left:67px;top:48px" width="16" height="16"><use href="#go"/></svg>
<svg class="a" style="left:105px;top:48px" width="16" height="16"><use href="#stop"/></svg>
<svg class="a" style="left:90px;top:54px;" width="8" height="5" viewBox="0 0 8 5"><path d="M0 .5h7.500L3.750 4.500z" fill="#858585"/></svg>
<svg class="a" style="left:128px;top:54px;" width="8" height="5" viewBox="0 0 8 5"><path d="M0 .5h7.500L3.750 4.500z" fill="#111"/></svg>
<svg class="a" style="left:148px;top:48px" width="16" height="16"><use href="#check"/></svg>
<svg class="a" style="left:172px;top:48px" width="13" height="16"><use href="#refdoc"/></svg>
<svg class="a" style="left:210px;top:48px" width="16" height="16"><use href="#usernew"/></svg>
<svg class="a" style="left:233px;top:48px" width="16" height="16"><use href="#gearnew"/></svg>
<svg class="a" style="left:256px;top:48px" width="16" height="16"><use href="#usersnew"/></svg>
<svg class="a" style="left:280px;top:47.5px" width="16" height="16"><use href="#docgray"/></svg>
<svg class="a" style="left:309px;top:48px" width="16" height="16"><use href="#usergray"/></svg>
<svg class="a" style="left:338px;top:48px" width="16" height="16"><use href="#folder1"/></svg>
<svg class="a" style="left:361px;top:48px" width="16" height="16"><use href="#folder2"/></svg>
<svg class="a" style="left:390px;top:48px" width="16" height="16"><use href="#redx"/></svg>
<svg class="a" style="left:419px;top:47.5px" width="16" height="16"><use href="#cert1"/></svg>
<svg class="a" style="left:442px;top:47.5px" width="16" height="16"><use href="#cert2"/></svg>
<svg class="a" style="left:465px;top:47.5px" width="16" height="16"><use href="#cert3"/></svg>
<svg class="a" style="left:488px;top:47.5px" width="16" height="16"><use href="#cert4"/></svg>
<svg class="a" style="left:511px;top:48px" width="16" height="16"><use href="#keys"/></svg>
<div class="a" style="left:0px;top:66px;width:1917px;height:1px;background:#e2e2e2;"></div>
<div class="a" style="left:0px;top:67px;width:400px;height:1px;background:#a0a0a0;"></div>
<div class="a" style="left:0px;top:68px;width:400px;height:1px;background:#696969;"></div>
<div class="a" style="left:404px;top:67px;width:1513px;height:1px;background:#a0a0a0;"></div>
<div class="a" style="left:404px;top:68px;width:1513px;height:1px;background:#696969;"></div>
<div class="a" style="left:406px;top:69px;width:1511px;height:1px;background:#f8f8f8;"></div>
<div class="a" style="left:400px;top:67px;width:4px;height:2px;background:#f0f0f0;"></div>
<div class="a" style="left:0px;top:67px;width:1px;height:952px;background:#a0a0a0;"></div>
<div class="a" style="left:1px;top:68px;width:1px;height:950px;background:#696969;"></div>
<div class="a" style="left:400px;top:69px;width:1px;height:951px;background:#fff;"></div>
<div class="a" style="left:0px;top:1019px;width:401px;height:1px;background:#fff;"></div>
<div class="a" style="left:2px;top:91px;width:394px;height:926px;background:#fff;"></div>
<div class="a" style="left:396px;top:91px;width:1px;height:927px;background:#dcdcdc;"></div>
<div class="a" style="left:2px;top:1017px;width:395px;height:1px;background:#d5d5d5;"></div>
<div class="a" style="left:2px;top:90px;width:394px;height:1px;background:#d9d9d9;"></div>
<div class="a" style="left:4px;top:71px;width:66px;height:20px;box-sizing:border-box;border:1px solid #dcdcdc;background:#f3f3f3;"></div>
<div class="a" style="left:69px;top:71px;width:65px;height:20px;box-sizing:border-box;border:1px solid #dcdcdc;background:#f3f3f3;"></div>
<div class="a" style="left:133px;top:71px;width:54px;height:20px;box-sizing:border-box;border:1px solid #dcdcdc;background:#f3f3f3;"></div>
<div class="a" style="left:187px;top:69px;width:67px;height:22px;background:#fff;"></div>
<div class="a" style="left:254px;top:69px;width:1px;height:22px;background:#dcdcdc;"></div>
<svg class="a" style="left:11px;top:73px" width="14" height="16"><use href="#report"/></svg>
<span class="t " style="left:31.80px;top:73.53px;font-size:12px;color:#000;transform:scaleX(0.8826);">Report</span>
<svg class="a" style="left:76px;top:72.5px" width="16" height="16"><use href="#status"/></svg>
<span class="t " style="left:97.30px;top:73.53px;font-size:12px;color:#000;transform:scaleX(0.8904);">Status</span>
<svg class="a" style="left:139.5px;top:72.5px" width="16" height="16"><use href="#vfs"/></svg>
<span class="t " style="left:161.30px;top:73.53px;font-size:12px;color:#000;transform:scaleX(0.8696);">VFS</span>
<svg class="a" style="left:197px;top:71px" width="12" height="16"><use href="#server"/></svg>
<span class="t " style="left:215.30px;top:71.53px;font-size:12px;color:#000;transform:scaleX(0.9054);">Server</span>
<div class="a" style="left:39px;top:113px;width:1px;height:244px;background:repeating-linear-gradient(180deg,#a0a0a0 0 1px,transparent 1px 2px)"></div>
<div class="a" style="left:58px;top:131px;width:1px;height:10px;background:repeating-linear-gradient(180deg,#a0a0a0 0 1px,transparent 1px 2px)"></div>
<div class="a" style="left:77px;top:149px;width:1px;height:190px;background:repeating-linear-gradient(180deg,#a0a0a0 0 1px,transparent 1px 2px)"></div>
<div class="a" style="left:96px;top:239px;width:1px;height:28px;background:repeating-linear-gradient(180deg,#a0a0a0 0 1px,transparent 1px 2px)"></div>
<div class="a" style="left:26px;top:105px;width:5px;height:1px;background:repeating-linear-gradient(90deg,#a0a0a0 0 1px,transparent 1px 2px)"></div>
<div class="a" style="left:16px;top:101px;width:9px;height:9px;box-sizing:border-box;border:1px solid #919191;background:linear-gradient(#fff 35%,#dcdad2);border-radius:1.500px;"></div>
<div class="a" style="left:18px;top:105px;width:5px;height:1px;background:#4a4a6a;"></div>
<svg class="a" style="left:31px;top:96px" width="16" height="16"><use href="#servers"/></svg>
<span class="t " style="left:51.90px;top:96.03px;font-size:12px;color:#000;transform:scaleX(0.9630);">Default Server Group</span>
<div class="a" style="left:45px;top:123px;width:5px;height:1px;background:repeating-linear-gradient(90deg,#a0a0a0 0 1px,transparent 1px 2px)"></div>
<div class="a" style="left:35px;top:119px;width:9px;height:9px;box-sizing:border-box;border:1px solid #919191;background:linear-gradient(#fff 35%,#dcdad2);border-radius:1.500px;"></div>
<div class="a" style="left:37px;top:123px;width:5px;height:1px;background:#4a4a6a;"></div>
<svg class="a" style="left:51.5px;top:114px" width="12" height="16"><use href="#server"/></svg>
<span class="t " style="left:71.20px;top:114.03px;font-size:12px;color:#000;transform:scaleX(0.8946);">ARCUS TRIAL</span>
<div class="a" style="left:64px;top:141px;width:5px;height:1px;background:repeating-linear-gradient(90deg,#a0a0a0 0 1px,transparent 1px 2px)"></div>
<div class="a" style="left:54px;top:137px;width:9px;height:9px;box-sizing:border-box;border:1px solid #919191;background:linear-gradient(#fff 35%,#dcdad2);border-radius:1.500px;"></div>
<div class="a" style="left:56px;top:141px;width:5px;height:1px;background:#4a4a6a;"></div>
<svg class="a" style="left:69px;top:132px" width="16" height="16"><use href="#globe"/></svg>
<span class="t " style="left:90.20px;top:132.03px;font-size:12px;color:#000;transform:scaleX(0.9418);">sup01</span>
<div class="a" style="left:83px;top:159px;width:5px;height:1px;background:repeating-linear-gradient(90deg,#a0a0a0 0 1px,transparent 1px 2px)"></div>
<div class="a" style="left:73px;top:155px;width:9px;height:9px;box-sizing:border-box;border:1px solid #919191;background:linear-gradient(#fff 35%,#dcdad2);border-radius:1.500px;"></div>
<div class="a" style="left:75px;top:159px;width:5px;height:1px;background:#4a4a6a;"></div>
<div class="a" style="left:77px;top:157px;width:1px;height:5px;background:#4a4a6a;"></div>
<svg class="a" style="left:88px;top:150px" width="16" height="16"><use href="#gear"/></svg>
<span class="t " style="left:109.20px;top:150.03px;font-size:12px;color:#000;transform:scaleX(0.9750);">User Settings Templates</span>
<div class="a" style="left:83px;top:177px;width:5px;height:1px;background:repeating-linear-gradient(90deg,#a0a0a0 0 1px,transparent 1px 2px)"></div>
<div class="a" style="left:73px;top:173px;width:9px;height:9px;box-sizing:border-box;border:1px solid #919191;background:linear-gradient(#fff 35%,#dcdad2);border-radius:1.500px;"></div>
<div class="a" style="left:75px;top:177px;width:5px;height:1px;background:#4a4a6a;"></div>
<div class="a" style="left:77px;top:175px;width:1px;height:5px;background:#4a4a6a;"></div>
<svg class="a" style="left:88px;top:168px" width="16" height="16"><use href="#groups"/></svg>
<span class="t " style="left:109.20px;top:168.03px;font-size:12px;color:#000;transform:scaleX(0.9807);">Groups</span>
<div class="a" style="left:78px;top:195px;width:10px;height:1px;background:repeating-linear-gradient(90deg,#a0a0a0 0 1px,transparent 1px 2px)"></div>
<svg class="a" style="left:88px;top:186px" width="16" height="16"><use href="#agents"/></svg>
<span class="t " style="left:109.20px;top:186.03px;font-size:12px;color:#000;transform:scaleX(0.9895);">Remote Agents</span>
<div class="a" style="left:78px;top:213px;width:10px;height:1px;background:repeating-linear-gradient(90deg,#a0a0a0 0 1px,transparent 1px 2px)"></div>
<svg class="a" style="left:88px;top:204px" width="16" height="16"><use href="#globe"/></svg>
<span class="t " style="left:109.20px;top:204.03px;font-size:12px;color:#000;transform:scaleX(1.0032);">Connection Profiles</span>
<div class="a" style="left:83px;top:231px;width:5px;height:1px;background:repeating-linear-gradient(90deg,#a0a0a0 0 1px,transparent 1px 2px)"></div>
<div class="a" style="left:73px;top:227px;width:9px;height:9px;box-sizing:border-box;border:1px solid #919191;background:linear-gradient(#fff 35%,#dcdad2);border-radius:1.500px;"></div>
<div class="a" style="left:75px;top:231px;width:5px;height:1px;background:#4a4a6a;"></div>
<svg class="a" style="left:88px;top:222px" width="16" height="16"><use href="#evrules"/></svg>
<span class="t " style="left:109.20px;top:222.03px;font-size:12px;color:#000;transform:scaleX(0.9335);">Event Rules</span>
<div class="a" style="left:97px;top:249px;width:10px;height:1px;background:repeating-linear-gradient(90deg,#a0a0a0 0 1px,transparent 1px 2px)"></div>
<svg class="a" style="left:108px;top:245px" width="15" height="7"><use href="#ruler"/></svg>
<span class="t " style="left:128.20px;top:240.03px;font-size:12px;color:#000;transform:scaleX(0.9114);">ARM TEST</span>
<div class="a" style="left:97px;top:267px;width:10px;height:1px;background:repeating-linear-gradient(90deg,#a0a0a0 0 1px,transparent 1px 2px)"></div>
<svg class="a" style="left:108px;top:263px" width="15" height="7"><use href="#ruler"/></svg>
<div class="a" style="left:126px;top:257px;width:190px;height:18px;background:#0872dc;"></div>
<span class="t " style="left:128.20px;top:258.03px;font-size:12px;color:#fff;transform:scaleX(0.9712);">On Verified Upload Succeeded Rule</span>
<div class="a" style="left:78px;top:285px;width:10px;height:1px;background:repeating-linear-gradient(90deg,#a0a0a0 0 1px,transparent 1px 2px)"></div>
<svg class="a" style="left:88px;top:276px" width="16" height="16"><use href="#agrules"/></svg>
<span class="t " style="left:109.20px;top:276.03px;font-size:12px;color:#000;transform:scaleX(0.9758);">Remote Agent Rules</span>
<div class="a" style="left:78px;top:303px;width:10px;height:1px;background:repeating-linear-gradient(90deg,#a0a0a0 0 1px,transparent 1px 2px)"></div>
<svg class="a" style="left:88px;top:294px" width="16" height="16"><use href="#gateway"/></svg>
<span class="t " style="left:109.20px;top:294.03px;font-size:12px;color:#000;transform:scaleX(0.9523);">Gateway</span>
<div class="a" style="left:83px;top:321px;width:5px;height:1px;background:repeating-linear-gradient(90deg,#a0a0a0 0 1px,transparent 1px 2px)"></div>
<div class="a" style="left:73px;top:317px;width:9px;height:9px;box-sizing:border-box;border:1px solid #919191;background:linear-gradient(#fff 35%,#dcdad2);border-radius:1.500px;"></div>
<div class="a" style="left:75px;top:321px;width:5px;height:1px;background:#4a4a6a;"></div>
<div class="a" style="left:77px;top:319px;width:1px;height:5px;background:#4a4a6a;"></div>
<svg class="a" style="left:88px;top:314px" width="16" height="14"><use href="#activity"/></svg>
<span class="t " style="left:109.20px;top:312.03px;font-size:12px;color:#000;transform:scaleX(1.0575);">Activity</span>
<div class="a" style="left:78px;top:339px;width:10px;height:1px;background:repeating-linear-gradient(90deg,#a0a0a0 0 1px,transparent 1px 2px)"></div>
<svg class="a" style="left:88px;top:330px" width="16" height="16"><use href="#search"/></svg>
<span class="t " style="left:109.20px;top:330.03px;font-size:12px;color:#000;transform:scaleX(0.9604);">Search (Ctrl+F)</span>
<div class="a" style="left:45px;top:357px;width:5px;height:1px;background:repeating-linear-gradient(90deg,#a0a0a0 0 1px,transparent 1px 2px)"></div>
<div class="a" style="left:35px;top:353px;width:9px;height:9px;box-sizing:border-box;border:1px solid #919191;background:linear-gradient(#fff 35%,#dcdad2);border-radius:1.500px;"></div>
<div class="a" style="left:37px;top:357px;width:5px;height:1px;background:#4a4a6a;"></div>
<div class="a" style="left:39px;top:355px;width:1px;height:5px;background:#4a4a6a;"></div>
<svg class="a" style="left:51.5px;top:348px" width="12" height="16"><use href="#server"/></svg>
<span class="t " style="left:71.20px;top:348.03px;font-size:12px;color:#000;transform:scaleX(0.9967);">LocalHost</span>
<svg class="a" style="left:245px;top:268px;" width="15" height="22" viewBox="0 0 15 22"><path d="M1.700 1.800v16l3.700-3.500 2.600 6 2.300-1-2.600-5.800h5z" fill="#000" opacity=".18"/><path d="M.5.500v16l3.700-3.500 2.600 6 2.300-1-2.600-5.800h5z" fill="#fff" stroke="#000" stroke-width="1"/></svg>
<div class="a" style="left:404px;top:67px;width:1px;height:953px;background:#a0a0a0;"></div>
<div class="a" style="left:405px;top:68px;width:1px;height:952px;background:#696969;"></div>
<div class="a" style="left:406px;top:69px;width:1px;height:950px;background:#f8f8f8;"></div>
<div class="a" style="left:417px;top:80px;width:13px;height:13px;box-sizing:border-box;border:1px solid #333;background:#fff;"></div>
<svg class="a" style="left:417px;top:80px;" width="13" height="13" viewBox="0 0 13 13"><path d="M2.800 6.500l2.700 2.800 5-6" fill="none" stroke="#222" stroke-width="1.300"/></svg>
<span class="t " style="left:432.00px;top:78.86px;font-size:11px;color:#000;transform:scaleX(0.9836);">Enable this rule:</span>
<span class="t " style="left:515.00px;top:78.86px;font-size:11px;color:#000;font-weight:bold;transform:scaleX(1.0895);">On Verified Upload Succeeded Rule [Verified Upload Succeeded]</span>
<span class="t " style="left:416.30px;top:101.36px;font-size:11px;color:#000;transform:scaleX(0.9675);">Comment:</span>
<div class="a" style="left:516px;top:102px;width:1392px;height:39px;box-sizing:border-box;border:1px solid #7a7a7a;background:#f0f0f0;"></div>
<span class="t " style="left:520.80px;top:104.36px;font-size:11px;color:#000;transform:scaleX(0.9993);">If integrity check of uploaded file succeeds when transferred using the Web Transfer Client.</span>
<svg class="a" style="left:1892px;top:110px;" width="10" height="7" viewBox="0 0 10 7"><path d="M1.200 5.800L5 2l3.800 3.800" fill="none" stroke="#c2c2c2" stroke-width="1.700"/></svg>
<svg class="a" style="left:1892px;top:127px;" width="10" height="7" viewBox="0 0 10 7"><path d="M1.200 1.200L5 5l3.800-3.800" fill="none" stroke="#c2c2c2" stroke-width="1.700"/></svg>
<span class="t " style="left:416.30px;top:146.36px;font-size:11px;color:#000;transform:scaleX(0.9937);">Conditions (optional):</span>
<span class="t " style="left:1180.10px;top:146.36px;font-size:11px;color:#000;transform:scaleX(1.0047);">Actions (required):</span>
<div class="a" style="left:417px;top:168px;width:721px;height:182px;box-sizing:border-box;border:1px solid #7a7a7a;background:#fff;"></div>
<div class="clip" style="left:418px;top:169px;width:719px;height:180px">
<span class="t " style="left:4.00px;top:2.06px;font-size:11px;color:#000;font-weight:bold;transform:scaleX(1.0695);">File System Conditions</span>
<div class="a" style="left:2px;top:16px;width:697px;height:1px;background:#7f7f7f;"></div>
<svg class="a" style="left:7px;top:18.0px" width="16" height="16"><use href="#qmark"/></svg>
<span class="t " style="left:24.00px;top:19.06px;font-size:11px;color:#000;transform:scaleX(0.9962);">If Virtual Path <u>does</u> <u>match</u> <u>[path mask]</u></span>
<svg class="a" style="left:7px;top:35.0px" width="16" height="16"><use href="#qmark"/></svg>
<span class="t " style="left:24.00px;top:36.06px;font-size:11px;color:#000;transform:scaleX(0.9878);">If Physical Path <u>does</u> <u>match</u> <u>[path mask]</u></span>
<svg class="a" style="left:7px;top:52.0px" width="16" height="16"><use href="#qmark"/></svg>
<span class="t " style="left:24.00px;top:53.06px;font-size:11px;color:#000;transform:scaleX(0.9843);">If Virtual Folder Name <u>does</u> <u>match</u> <u>[path mask]</u></span>
<svg class="a" style="left:7px;top:69.0px" width="16" height="16"><use href="#qmark"/></svg>
<span class="t " style="left:24.00px;top:70.06px;font-size:11px;color:#000;transform:scaleX(0.9779);">If Physical Folder Name <u>does</u> <u>match</u> <u>[path mask]</u></span>
<svg class="a" style="left:7px;top:86.0px" width="16" height="16"><use href="#qmark"/></svg>
<span class="t " style="left:24.00px;top:87.06px;font-size:11px;color:#000;transform:scaleX(0.9840);">If File Name <u>does</u> <u>match</u> <u>[path mask]</u></span>
<svg class="a" style="left:7px;top:103.0px" width="16" height="16"><use href="#qmark"/></svg>
<span class="t " style="left:24.00px;top:104.06px;font-size:11px;color:#000;transform:scaleX(0.9708);">If Base File Name <u>does</u> <u>match</u> <u>[mask]</u></span>
<svg class="a" style="left:7px;top:120.0px" width="16" height="16"><use href="#qmark"/></svg>
<span class="t " style="left:24.00px;top:121.06px;font-size:11px;color:#000;transform:scaleX(0.9847);">If File Size <u>does</u> <u>equal to</u> <u>[size (B)]</u></span>
<svg class="a" style="left:7px;top:137.0px" width="16" height="16"><use href="#qmark"/></svg>
<span class="t " style="left:24.00px;top:138.06px;font-size:11px;color:#000;transform:scaleX(1.0325);">If <u>File</u> <u>does</u> exist at <u>[path]</u></span>
<span class="t " style="left:4.00px;top:155.16px;font-size:11px;color:#000;font-weight:bold;transform:scaleX(1.0782);">User Conditions</span>
<div class="a" style="left:2px;top:169px;width:697px;height:1px;background:#7f7f7f;"></div>
<svg class="a" style="left:7px;top:172px" width="16" height="16"><use href="#qmark"/></svg>
<span class="t " style="left:24.00px;top:173.56px;font-size:11px;color:#000;transform:scaleX(0.9925);">If User <u>is a member of</u> <u>[specific group(s)]</u></span>
<div class="a" style="left:702px;top:0px;width:17px;height:180px;background:#f0f0f0;"></div>
<div class="a" style="left:702px;top:18px;width:15px;height:23px;background:#cdcdcd;"></div>
<svg class="a" style="left:705px;top:6px;" width="10" height="7" viewBox="0 0 10 7"><path d="M1.200 5.800L5 2l3.800 3.800" fill="none" stroke="#404040" stroke-width="1.900"/></svg>
<svg class="a" style="left:705px;top:167px;" width="10" height="7" viewBox="0 0 10 7"><path d="M1.200 1.200L5 5l3.800-3.800" fill="none" stroke="#404040" stroke-width="1.900"/></svg>
</div>
<div class="a" style="left:1181px;top:168px;width:727px;height:182px;box-sizing:border-box;border:1px solid #7a7a7a;background:#fff;"></div>
<div class="clip" style="left:1182px;top:169px;width:725px;height:180px">
<svg class="a" style="left:7.0px;top:3.1999999999999886px" width="15" height="12"><use href="#mail"/></svg>
<span class="t " style="left:23.90px;top:2.06px;font-size:11px;color:#000;transform:scaleX(0.9820);">Send <u>notification email</u></span>
<svg class="a" style="left:7.0px;top:18.69999999999999px" width="15" height="15"><use href="#upg"/></svg>
<span class="t " style="left:23.90px;top:19.06px;font-size:11px;color:#000;transform:scaleX(1.0112);">Copy/Move (push) <u>file</u> to <u>host</u></span>
<svg class="a" style="left:7.0px;top:35.69999999999999px" width="15" height="15"><use href="#downg"/></svg>
<span class="t " style="left:23.90px;top:36.06px;font-size:11px;color:#000;transform:scaleX(0.9960);">Download (pull) <u>file</u> from <u>host</u></span>
<svg class="a" style="left:6.5px;top:53.69999999999999px" width="16" height="13"><use href="#folder"/></svg>
<span class="t " style="left:23.90px;top:53.06px;font-size:11px;color:#000;transform:scaleX(1.0065);">Perform folder <u>operation</u></span>
<svg class="a" style="left:8.0px;top:69.19999999999999px" width="13" height="16"><use href="#file"/></svg>
<span class="t " style="left:23.90px;top:70.06px;font-size:11px;color:#000;transform:scaleX(1.0041);">Perform file <u>operation</u></span>
<svg class="a" style="left:8.0px;top:86.19999999999999px" width="13" height="16"><use href="#lock"/></svg>
<span class="t " style="left:23.90px;top:87.06px;font-size:11px;color:#000;transform:scaleX(0.9619);">OpenPGP <u>operations</u></span>
<svg class="a" style="left:8.0px;top:103.19999999999999px" width="13" height="16"><use href="#file"/></svg>
<span class="t " style="left:23.90px;top:104.06px;font-size:11px;color:#000;transform:scaleX(1.0091);">Generate <u>Report</u></span>
<svg class="a" style="left:7.0px;top:120.19999999999999px" width="15" height="16"><use href="#as2"/></svg>
<span class="t " style="left:23.90px;top:121.06px;font-size:11px;color:#000;transform:scaleX(0.9888);">AS2 Send <u>file</u> to <u>host</u></span>
<svg class="a" style="left:8.0px;top:137.2px" width="13" height="16"><use href="#evlog"/></svg>
<span class="t " style="left:23.90px;top:138.06px;font-size:11px;color:#000;transform:scaleX(0.9943);">Write to <u>Windows Event Log</u></span>
<svg class="a" style="left:6.5px;top:154.2px" width="16" height="16"><use href="#scan"/></svg>
<span class="t " style="left:23.90px;top:155.06px;font-size:11px;color:#000;transform:scaleX(1.0028);">Scan <u>file</u> using <u>Content Integrity Control</u></span>
<svg class="a" style="left:6.5px;top:172.7px" width="16" height="13"><use href="#zipf"/></svg>
<span class="t " style="left:23.90px;top:172.06px;font-size:11px;color:#000;transform:scaleX(0.9916);">De/Compress <u>file</u> to/from <u>file</u></span>
<div class="a" style="left:708px;top:0px;width:17px;height:180px;background:#f0f0f0;"></div>
<div class="a" style="left:708px;top:18px;width:15px;height:97px;background:#cdcdcd;"></div>
<svg class="a" style="left:711px;top:6px;" width="10" height="7" viewBox="0 0 10 7"><path d="M1.200 5.800L5 2l3.800 3.800" fill="none" stroke="#404040" stroke-width="1.900"/></svg>
<svg class="a" style="left:711px;top:167px;" width="10" height="7" viewBox="0 0 10 7"><path d="M1.200 1.200L5 5l3.800-3.800" fill="none" stroke="#404040" stroke-width="1.900"/></svg>
</div>
<div class="a" style="left:418px;top:359px;width:103px;height:21px;box-sizing:border-box;border:1px solid #bfbfbf;background:#e4e4e4;"></div>
<span class="t " style="left:437.10px;top:362.06px;font-size:11px;color:#838383;transform:scaleX(0.9765);">Add Con<span style="text-decoration:underline">d</span>ition</span>
<svg class="a" style="left:422px;top:364.5px" width="9" height="9"><use href="#arrdn"/></svg>
<div class="a" style="left:1182px;top:359px;width:96px;height:21px;box-sizing:border-box;border:1px solid #bfbfbf;background:#e4e4e4;"></div>
<span class="t " style="left:1201.20px;top:362.06px;font-size:11px;color:#838383;transform:scaleX(0.9998);">Add Ac<span style="text-decoration:underline">t</span>ion</span>
<svg class="a" style="left:1186px;top:364.5px" width="9" height="9"><use href="#arrdn"/></svg>
<span class="t " style="left:416.30px;top:403.86px;font-size:11px;color:#000;transform:scaleX(0.9526);">Rule Builder:</span>
<div class="a" style="left:417px;top:421px;width:1491px;height:467px;box-sizing:border-box;border:1px solid #7a7a7a;background:#fff;"></div>
<div class="a" style="left:433px;top:427px;width:9px;height:9px;box-sizing:border-box;border:1px solid #919191;background:linear-gradient(#fff 35%,#dcdad2);border-radius:1.500px;"></div>
<div class="a" style="left:435px;top:431px;width:5px;height:1px;background:#4a4a6a;"></div>
<div class="a" style="left:443px;top:431px;width:7px;height:1px;background:repeating-linear-gradient(90deg,#a0a0a0 0 1px,transparent 1px 2px)"></div>
<div class="a" style="left:450px;top:423px;width:153px;height:15px;border:1px dotted #222;box-sizing:content-box"></div>
<svg class="a" style="left:461px;top:425.5px" width="10" height="10"><use href="#play"/></svg>
<span class="t " style="left:475.00px;top:421.66px;font-size:11px;color:#000;transform:scaleX(0.9637);">Verified Upload Succeeded</span>
<div class="a" style="left:467px;top:438px;width:1px;height:5px;background:#1a2a6a;"></div>
<div class="a" style="left:463px;top:443px;width:9px;height:9px;box-sizing:border-box;border:1px solid #919191;background:linear-gradient(#fff 35%,#dcdad2);border-radius:1.500px;"></div>
<div class="a" style="left:465px;top:447px;width:5px;height:1px;background:#4a4a6a;"></div>
<div class="a" style="left:472px;top:447px;width:10px;height:1px;background:#1a2a6a;"></div>
<svg class="a" style="left:488px;top:439.5px" width="15" height="15"><use href="#upg"/></svg>
<span class="t rb" style="left:505.00px;top:438.06px;font-size:11px;color:#000;transform:scaleX(0.9833);"><u>Move</u> file '<u>%FS.PATH%</u>' to <u>SFTP server: '127.0.0.1</u>' as '<u>/test/%SOURCE.FILE_NAME%</u>'</span>
<div class="a" style="left:497px;top:454px;width:1px;height:5px;background:#1a2a6a;"></div>
<div class="a" style="left:493px;top:459px;width:9px;height:9px;box-sizing:border-box;border:1px solid #919191;background:linear-gradient(#fff 35%,#dcdad2);border-radius:1.500px;"></div>
<div class="a" style="left:495px;top:463px;width:5px;height:1px;background:#4a4a6a;"></div>
<div class="a" style="left:497px;top:461px;width:1px;height:5px;background:#4a4a6a;"></div>
<div class="a" style="left:502px;top:463px;width:10px;height:1px;background:#2a5a4a;"></div>
<span class="t " style="left:516.60px;top:454.16px;font-size:11px;color:#000;transform:scaleX(0.9851);">if action FAILED then</span>
<div class="a" style="left:418px;top:900px;width:19px;height:19px;box-sizing:border-box;border:1px solid #adadad;background:#e1e1e1;"></div>
<svg class="a" style="left:423px;top:905px" width="9" height="9"><use href="#arrdn"/></svg>
<div class="a" style="left:443px;top:900px;width:19px;height:19px;box-sizing:border-box;border:1px solid #adadad;background:#e1e1e1;"></div>
<svg class="a" style="left:448px;top:905px" width="9" height="9"><use href="#arrup"/></svg>
<div class="a" style="left:1379px;top:899px;width:70px;height:21px;box-sizing:border-box;border:1px solid #adadad;background:#e1e1e1;"></div>
<span class="t " style="left:1383.60px;top:902.06px;font-size:11px;color:#000;transform:scaleX(0.9774);">Change Log</span>
<div class="a" style="left:1522px;top:899px;width:58px;height:21px;box-sizing:border-box;border:1px solid #bfbfbf;background:#cccccc;"></div>
<span class="t " style="left:1536.90px;top:902.06px;font-size:11px;color:#838383;transform:scaleX(1.0161);">Copy</span>
<div class="a" style="left:1585px;top:899px;width:58px;height:21px;box-sizing:border-box;border:1px solid #bfbfbf;background:#cccccc;"></div>
<span class="t " style="left:1598.50px;top:902.06px;font-size:11px;color:#838383;transform:scaleX(1.0128);">Paste</span>
<div class="a" style="left:1648px;top:899px;width:109px;height:21px;box-sizing:border-box;border:1px solid #adadad;background:#e1e1e1;"></div>
<span class="t " style="left:1653.50px;top:902.06px;font-size:11px;color:#000;transform:scaleX(1.0010);">Reset to last known</span>
<div class="a" style="left:1762px;top:899px;width:66px;height:21px;box-sizing:border-box;border:1px solid #bfbfbf;background:#cccccc;"></div>
<span class="t " style="left:1769.60px;top:902.06px;font-size:11px;color:#838383;transform:scaleX(0.9573);">Clear Line</span>
<div class="a" style="left:1834px;top:899px;width:73px;height:21px;box-sizing:border-box;border:1px solid #adadad;background:#e1e1e1;"></div>
<span class="t " style="left:1849.30px;top:902.06px;font-size:11px;color:#000;transform:scaleX(0.9837);">Clear All</span>
<span class="t " style="left:416.30px;top:929.06px;font-size:11px;color:#000;transform:scaleX(0.9822);">Use the up and down arrows to change the sequence in which selected Actions and Conditions occur.</span>
<div class="a" style="left:417px;top:946px;width:1491px;height:20px;box-sizing:border-box;border:1px solid #d2d2d2;background:#f0f0f0;box-shadow:inset 0 0 0 1px #f9f9f9;"></div>
<svg class="a" style="left:430px;top:984.5px" width="17" height="14"><use href="#checkg"/></svg>
<span class="t " style="left:447.10px;top:984.06px;font-size:11px;color:#838383;transform:scaleX(0.9989);">Apply</span>
<svg class="a" style="left:520px;top:985px" width="13" height="16"><use href="#refdoc"/></svg>
<span class="t " style="left:535.50px;top:985.16px;font-size:11px;color:#000;transform:scaleX(1.0148);">Refresh</span>
<svg class="a" style="left:614px;top:985px;" width="14" height="14" viewBox="0 0 14 14"><path d="M1.500 1.200l11.500 11.500M12.500 1L1 13" stroke="#d23a10" stroke-width="1.700" stroke-linecap="round" fill="none"/></svg>
<span class="t " style="left:630.30px;top:985.16px;font-size:11px;color:#000;transform:scaleX(0.9788);">Remove</span>
<div class="a" style="left:404px;top:1019px;width:1513px;height:1px;background:#fafafa;"></div>
<div class="a" style="left:0px;top:1021px;width:1917px;height:1px;background:#d7d7d7;"></div>
<div class="a" style="left:1801px;top:1023px;width:1px;height:13px;background:#d4d4d4;"></div>
<div class="a" style="left:1802px;top:1023px;width:1px;height:13px;background:#fafafa;"></div>
<span class="t " style="left:2.30px;top:1024.03px;font-size:12px;color:#000;transform:scaleX(0.9312);">Ready</span>
<span class="t " style="left:1438.00px;top:1024.03px;font-size:12px;color:#000;transform:scaleX(0.9252);">EFT Server started on Jan 11, 2018, 08:22:28 PM</span>
<span class="t " style="left:1805.30px;top:1024.03px;font-size:12px;color:#000;transform:scaleX(0.9653);">Users connected: 0</span>
<div class="a" style="left:0px;top:1035px;width:1917px;height:1px;background:#cfe6f4;"></div>
<div class="a" style="left:0px;top:1036px;width:1917px;height:1px;background:#58b8f4;"></div>
</div>
</body></html>
